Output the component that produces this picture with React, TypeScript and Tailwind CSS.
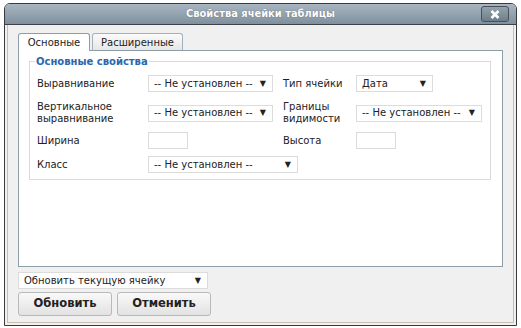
import React from 'react';

const font = { fontFamily: '"DejaVu Sans", Verdana, sans-serif' };

function Select({ value, width }: { value: string; width: string }) {
  return (
    <div className={`flex h-[17px] items-center justify-between whitespace-nowrap border border-[#dcdcdc] bg-white pl-[5px] pr-[6px] text-[10px] text-[#222] ${width}`}>
      <span className="leading-none">{value}</span>
      <span className="text-[8px] leading-none">▼</span>
    </div>
  );
}

function Input({ width }: { width: string }) {
  return <div className={`h-[17px] border border-[#dcdcdc] bg-white ${width}`} />;
}

export default function App() {
  return (
    <div className="h-[328px] w-[521px] bg-white pl-[4px] pt-[3px]" style={font}>
      <div className="flex h-[323px] w-[513px] flex-col overflow-hidden rounded-t-[6px] border border-[#3a3a3a] bg-[#f0f0f0]">
        {/* Title bar */}
        <div className="relative flex h-[21px] shrink-0 items-center justify-center border-b border-[#3c4248] bg-gradient-to-b from-[#a9b6c1] to-[#7f909d]">
          <span className="text-[11px] font-bold text-white [font-family:'DejaVu_Sans_Condensed','DejaVu_Sans',sans-serif] [text-shadow:0_0_1px_#556]">
            Свойства ячейки таблицы
          </span>
          <div className="absolute right-[7px] top-[2px] flex h-[16px] w-[28px] items-center justify-center rounded-[3px] border border-[#46515a] bg-gradient-to-b from-[#94a3ae] to-[#6d7e8a]">
            <svg width="10" height="9" viewBox="0 0 10 9">
              <path d="M1.5 1 L8.5 8 M8.5 1 L1.5 8" stroke="white" strokeWidth="2.6" />
            </svg>
          </div>
        </div>

        {/* Body */}
        <div className="mx-[2px] mb-[2px] flex flex-1 flex-col border border-t-0 border-[#c9bdb0] pl-[10px] pr-[10px]">
          {/* Tabs */}
          <div className="mt-[8px] flex items-end gap-[2px] text-[10px]">
            <div className="relative z-10 -mb-px flex h-[18px] w-[72px] items-center justify-center rounded-t-[3px] border border-b-0 border-[#8e9ea9] bg-white text-[#222]">
              Основные
            </div>
            <div className="flex h-[17px] w-[91px] items-center justify-center rounded-t-[3px] border border-b-0 border-[#a5b1ba] bg-gradient-to-b from-[#fbfbfb] to-[#e6e6e6] text-[#222]">
              Расширенные
            </div>
          </div>

          {/* Panel */}
          <div className="h-[217px] w-[485px] border border-[#8e9ea9] bg-white pl-[10px] pt-[3px]">
            <fieldset className="h-[126px] w-[462px] border border-[#dadada] pl-[7px]">
              <legend className="-ml-[2px] px-[1px] text-[10px] font-bold text-[#2a68ad]">Основные свойства</legend>

              <div className="mt-[6px] flex h-[17px] items-center whitespace-nowrap text-[10px] text-[#222]">
                <span className="w-[111px]">Выравнивание</span>
                <Select value="-- Не установлен --" width="w-[125px]" />
                <span className="ml-[10px] w-[73px]">Тип ячейки</span>
                <Select value="Дата" width="w-[77px]" />
              </div>

              <div className="mt-[8px] flex h-[26px] items-center whitespace-nowrap text-[10px] leading-[12px] text-[#222]">
                <span className="w-[111px]">Вертикальное<br />выравнивание</span>
                <Select value="-- Не установлен --" width="w-[125px]" />
                <span className="ml-[10px] w-[73px]">Границы<br />видимости</span>
                <Select value="-- Не установлен --" width="w-[126px]" />
              </div>

              <div className="mt-[6px] flex h-[17px] items-center whitespace-nowrap text-[10px] text-[#222]">
                <span className="w-[111px]">Ширина</span>
                <Input width="w-[40px]" />
                <span className="ml-[95px] w-[73px]">Высота</span>
                <Input width="w-[40px]" />
              </div>

              <div className="mt-[7px] flex h-[17px] items-center whitespace-nowrap text-[10px] text-[#222]">
                <span className="w-[111px]">Класс</span>
                <Select value="-- Не установлен --" width="w-[150px]" />
              </div>
            </fieldset>
          </div>

          {/* Footer */}
          <div className="mt-[5px]">
            <Select value="Обновить текущую ячейку" width="w-[190px]" />
          </div>
          <div className="mt-[3px] flex gap-[5px]">
            <button className="h-[24px] w-[94px] rounded-[3px] border border-[#b9b9b9] bg-gradient-to-b from-[#f9f9f9] to-[#e2e2e2] text-[11.5px] font-bold text-[#222]">
              Обновить
            </button>
            <button className="h-[24px] w-[94px] rounded-[3px] border border-[#b9b9b9] bg-gradient-to-b from-[#f9f9f9] to-[#e2e2e2] text-[11.5px] font-bold text-[#222]">
              Отменить
            </button>
          </div>
        </div>
      </div>
    </div>
  );
}
